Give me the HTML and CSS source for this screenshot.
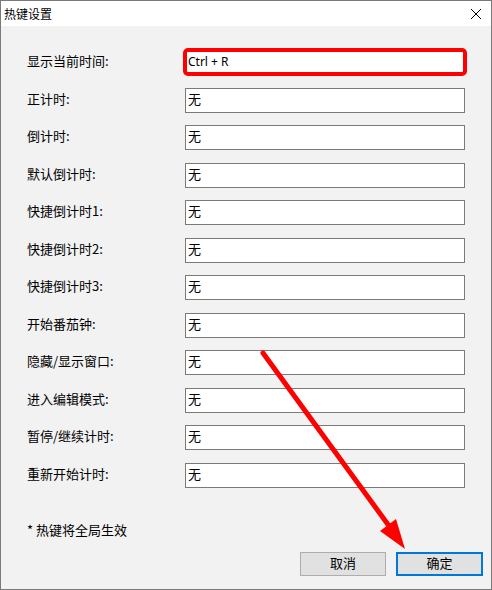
FILE: index.html
```html
<!DOCTYPE html>
<html lang="zh-CN">
<head>
<meta charset="utf-8">
<title>热键设置</title>
<link rel="stylesheet" href="styles.css">
</head>
<body>
<div class="window">
  <div class="titlebar">
    <span class="title">热键设置</span>
    <svg class="close" width="12" height="12" viewBox="0 0 12 12"><path d="M1 1 L11 11 M11 1 L1 11" stroke="#000" stroke-width="1" fill="none"/></svg>
  </div>
  <div class="content">
    <div class="form">
      <label class="lbl">显示当前时间:</label><div class="field hl"><span class="val latin">Ctrl + R</span></div>
      <label class="lbl">正计时:</label><div class="field"><span class="val">无</span></div>
      <label class="lbl">倒计时:</label><div class="field"><span class="val">无</span></div>
      <label class="lbl">默认倒计时:</label><div class="field"><span class="val">无</span></div>
      <label class="lbl">快捷倒计时1:</label><div class="field"><span class="val">无</span></div>
      <label class="lbl">快捷倒计时2:</label><div class="field"><span class="val">无</span></div>
      <label class="lbl">快捷倒计时3:</label><div class="field"><span class="val">无</span></div>
      <label class="lbl">开始番茄钟:</label><div class="field"><span class="val">无</span></div>
      <label class="lbl">隐藏/显示窗口:</label><div class="field"><span class="val">无</span></div>
      <label class="lbl">进入编辑模式:</label><div class="field"><span class="val">无</span></div>
      <label class="lbl">暂停/继续计时:</label><div class="field"><span class="val">无</span></div>
      <label class="lbl">重新开始计时:</label><div class="field"><span class="val">无</span></div>
    </div>
    <div class="note">* 热键将全局生效</div>
    <div class="buttons">
      <button class="btn">取消</button>
      <button class="btn primary">确定</button>
    </div>
  </div>
  <svg class="arrow" width="492" height="590" viewBox="0 0 492 590">
    <line x1="263" y1="353" x2="392" y2="530" stroke="#ff0000" stroke-width="5" stroke-linecap="round"/>
    <polygon points="405,549 380,531 396,519" fill="#ff0000"/>
  </svg>
</div>
</body>
</html>
```
FILE: styles.css
```css
* { box-sizing: border-box; }
html, body { margin: 0; padding: 0; }
body {
  font-family: "Noto Sans CJK SC", "Noto Sans", sans-serif;
  color: #000;
  background: #f2f2f2;
}
.window {
  position: relative;
  width: 492px;
  height: 590px;
  border: 1px solid #7a7a7a;
  background: #f2f2f2;
  display: flex;
  flex-direction: column;
}
.titlebar {
  height: 25px;
  background: #fff;
  display: flex;
  align-items: center;
  justify-content: space-between;
  padding: 0 9px 0 3px;
}
.title {
  font-size: 12px;
  line-height: 16px;
}
.close { display: block; }
.content {
  flex: 1;
  display: flex;
  flex-direction: column;
  padding: 24px 8px 0 26px;
}
.form {
  display: grid;
  grid-template-columns: 158px 280px;
  grid-auto-rows: 25px;
  row-gap: 12.5px;
  align-items: center;
}
.lbl {
  font-size: 13px;
  line-height: 16px;
  margin-top: -3px;
}
.field {
  position: relative;
  height: 25px;
  background: #fff;
  border: 1px solid #7a7a7a;
  display: flex;
  align-items: center;
  padding-left: 2px;
}
.val {
  font-size: 13px;
  line-height: 16px;
  margin-top: -3px;
}
.val.latin {
  font-family: "Noto Sans", "Noto Sans CJK SC", sans-serif;
  font-size: 12px;
  margin-top: -2px;
}
.field.hl::after {
  content: "";
  position: absolute;
  top: -3px;
  left: -3px;
  right: -3px;
  bottom: -2px;
  border: 4px solid #ff0000;
  border-radius: 5px;
}
.note {
  font-size: 13px;
  line-height: 16px;
  margin-top: 34px;
}
.buttons {
  display: flex;
  justify-content: flex-end;
  gap: 10px;
  margin-top: 14px;
}
.btn {
  width: 86px;
  height: 24px;
  font-family: "Noto Sans CJK SC", sans-serif;
  font-size: 13px;
  line-height: 16px;
  background: #e1e1e1;
  border: 1px solid #adadad;
  border-radius: 0;
  padding: 0 0 2px 0;
  color: #000;
}
.btn.primary {
  width: 87px;
  border: 2px solid #0078d7;
}
.arrow {
  position: absolute;
  left: -1px;
  top: -1px;
  pointer-events: none;
}
```
